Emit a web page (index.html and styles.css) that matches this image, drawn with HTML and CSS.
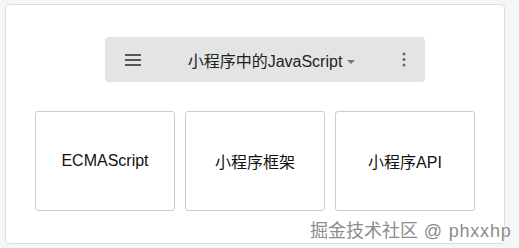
FILE: index.html
```html
<!DOCTYPE html>
<html lang="zh-CN">
<head>
	<meta charset="UTF-8">
	<meta name="viewport" content="width=device-width, initial-scale=1.0">
	<link rel="stylesheet" href="styles.css">
	<title>小程序中的JavaScript</title>
</head>
<body>
	<div class="panel">
		<div class="toolbar">
			<svg class="menu" width="16" height="12" viewBox="0 0 16 12">
				<rect x="0" y="0" width="16" height="2" fill="#555"/>
				<rect x="0" y="5" width="16" height="2" fill="#555"/>
				<rect x="0" y="10" width="16" height="2" fill="#555"/>
			</svg>
			<div class="title">小程序中的JavaScript<span class="caret"></span></div>
			<svg class="more" width="4" height="15" viewBox="0 0 4 15">
				<circle cx="2" cy="2" r="1.5" fill="#666"/>
				<circle cx="2" cy="7.5" r="1.5" fill="#666"/>
				<circle cx="2" cy="13" r="1.5" fill="#666"/>
			</svg>
		</div>
		<div class="cards">
			<div class="card">ECMAScript</div>
			<div class="card">小程序框架</div>
			<div class="card">小程序API</div>
		</div>
	</div>
	<div class="watermark">掘金技术社区<span class="handle"> @ phxxhp</span></div>
</body>
</html>
```

FILE: styles.css
```css
*{
	padding: 0;
	margin: 0;
	box-sizing: border-box;
	font-family: "Liberation Sans", "Noto Sans CJK SC", sans-serif;
}
body{
	width: 519px;
	height: 248px;
	background-color: #f5f6f7;
	padding: 4px 0 0 5px;
	position: relative;
	overflow: hidden;
}
.panel{
	width: 500px;
	height: 240px;
	background-color: #fff;
	border: 1px solid #ddd;
	border-radius: 4px;
	padding: 32px 29px 0;
}
.toolbar{
	width: 320px;
	height: 45px;
	margin-left: 70px;
	background-color: #e4e4e4;
	border-radius: 4px;
	display: flex;
	align-items: center;
	padding: 0 20px;
}
.menu{
	display: block;
}
.more{
	display: block;
	margin-right: -1px;
}
.title{
	flex: 1;
	text-align: center;
	font-size: 16px;
	color: #222;
}
.caret{
	display: inline-block;
	width: 0;
	height: 0;
	margin-left: 5px;
	vertical-align: 3px;
	border-left: 4px solid transparent;
	border-right: 4px solid transparent;
	border-top: 4px solid #777;
}
.cards{
	display: flex;
	gap: 10px;
	margin-top: 29px;
}
.card{
	width: 140px;
	height: 100px;
	border: 1px solid #ccc;
	border-radius: 3px;
	display: flex;
	align-items: center;
	justify-content: center;
	font-size: 16px;
	color: #111;
}
.watermark{
	position: absolute;
	left: 310px;
	top: 216px;
	font-size: 18px;
	color: #8c8c8c;
	white-space: nowrap;
	text-shadow: 0 0 2px #fff, 0 0 2px #fff;
}
.handle{
	letter-spacing: 0.8px;
}
```
